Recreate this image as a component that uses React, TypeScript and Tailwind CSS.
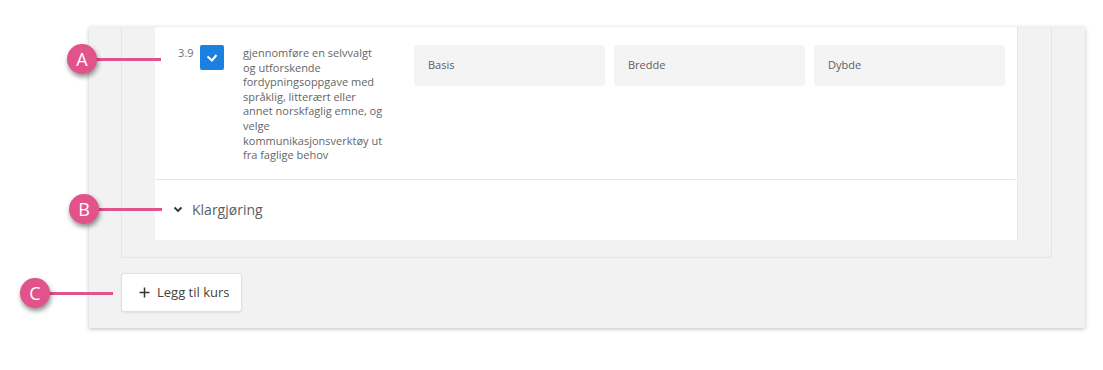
import React from "react";

function Callout({ letter, cx, cy, lineEnd }: { letter: string; cx: number; cy: number; lineEnd: number }) {
  return (
    <>
      <div
        className="absolute h-[3px] bg-[#e2528b]"
        style={{ left: cx + 10, top: cy - 1.5, width: lineEnd - cx - 10 }}
      />
      <div
        className="absolute flex h-[30px] w-[30px] items-center justify-center rounded-full bg-[#e2528b] text-[18px] text-white shadow-[1px_3px_5px_rgba(0,0,0,0.45)]"
        style={{ left: cx - 15, top: cy - 15 }}
      >
        {letter}
      </div>
    </>
  );
}

const lines = [
  "gjennomføre en selvvalgt",
  "og utforskende",
  "fordypningsoppgave med",
  "språklig, litterært eller",
  "annet norskfaglig emne, og",
  "velge",
  "kommunikasjonsverktøy ut",
  "fra faglige behov",
];

export default function App() {
  const font = { fontFamily: '"Open Sans", "Noto Sans", sans-serif' };
  return (
    <div className="relative h-[370px] w-[1103px] overflow-hidden bg-white" style={font}>
      <div className="ml-[89px] mt-[27px] flex h-[301px] w-[996px] flex-col bg-[#f2f2f2] pl-[32px] shadow-[0_1px_4px_rgba(0,0,0,0.25)]">
        <div className="flex h-[231px] w-[931px] flex-col rounded-b-[4px] border-x border-b border-[#e4e4e8] pb-[17px] pl-[33px]">
          <div className="flex h-[213px] w-[863px] flex-col bg-white">
            <div className="flex h-[153px] rounded-br-[3px] border-b border-r border-[#e8e8ec] pl-[23px] pt-[18px]">
              <div className="mt-[1px] w-[22px] text-[11px] leading-[14px] text-[#707070]">3.9</div>
              <div className="flex h-[25px] w-[24px] items-center justify-center rounded-[2px] bg-[#1b80e0]">
                <svg width="12" height="9" viewBox="0 0 12 9">
                  <polyline points="1.5,3.5 6,7.5 10.5,2" fill="none" stroke="white" strokeWidth="2" />
                </svg>
              </div>
              <div className="ml-[19px] mt-[1px] flex w-[142px] flex-col text-[11px] leading-[14.6px] text-[#666]">
                {lines.map((l) => (
                  <span key={l} className="whitespace-nowrap">
                    {l}
                  </span>
                ))}
              </div>
              <div className="ml-[29px] flex gap-[9px]">
                {["Basis", "Bredde", "Dybde"].map((t) => (
                  <div
                    key={t}
                    className="flex h-[41px] w-[191px] items-center rounded-[3px] bg-[#f4f4f4] pl-[14px] text-[11px] text-[#5e5e5e]"
                  >
                    {t}
                  </div>
                ))}
              </div>
            </div>
            <div className="flex flex-1 items-center border-r border-[#e8e8ec] pl-[18px] pb-[1px]">
              <svg width="10" height="7" viewBox="0 0 10 7" className="mr-[9px]">
                <polyline points="1.5,1.5 5,5 8.5,1.5" fill="none" stroke="#333" strokeWidth="1.8" />
              </svg>
              <span className="text-[14px] text-[#5e5e5e]">Klargjøring</span>
            </div>
          </div>
        </div>
        <div className="mt-[15px] flex h-[39px] w-[121px] items-center rounded-[3px] border border-[#e0e0e0] bg-white pl-[17px] shadow-[0_1px_2px_rgba(0,0,0,0.08)]">
          <svg width="11" height="11" viewBox="0 0 11 11" className="mr-[7px]">
            <path d="M5.5 0.5V10.5M0.5 5.5H10.5" stroke="#333" strokeWidth="1.5" />
          </svg>
          <span className="text-[13px] text-[#444]">Legg til kurs</span>
        </div>
      </div>
      <Callout letter="A" cx={82} cy={59} lineEnd={161} />
      <Callout letter="B" cx={84} cy={209} lineEnd={162} />
      <Callout letter="C" cx={35} cy={293} lineEnd={113} />
    </div>
  );
}
